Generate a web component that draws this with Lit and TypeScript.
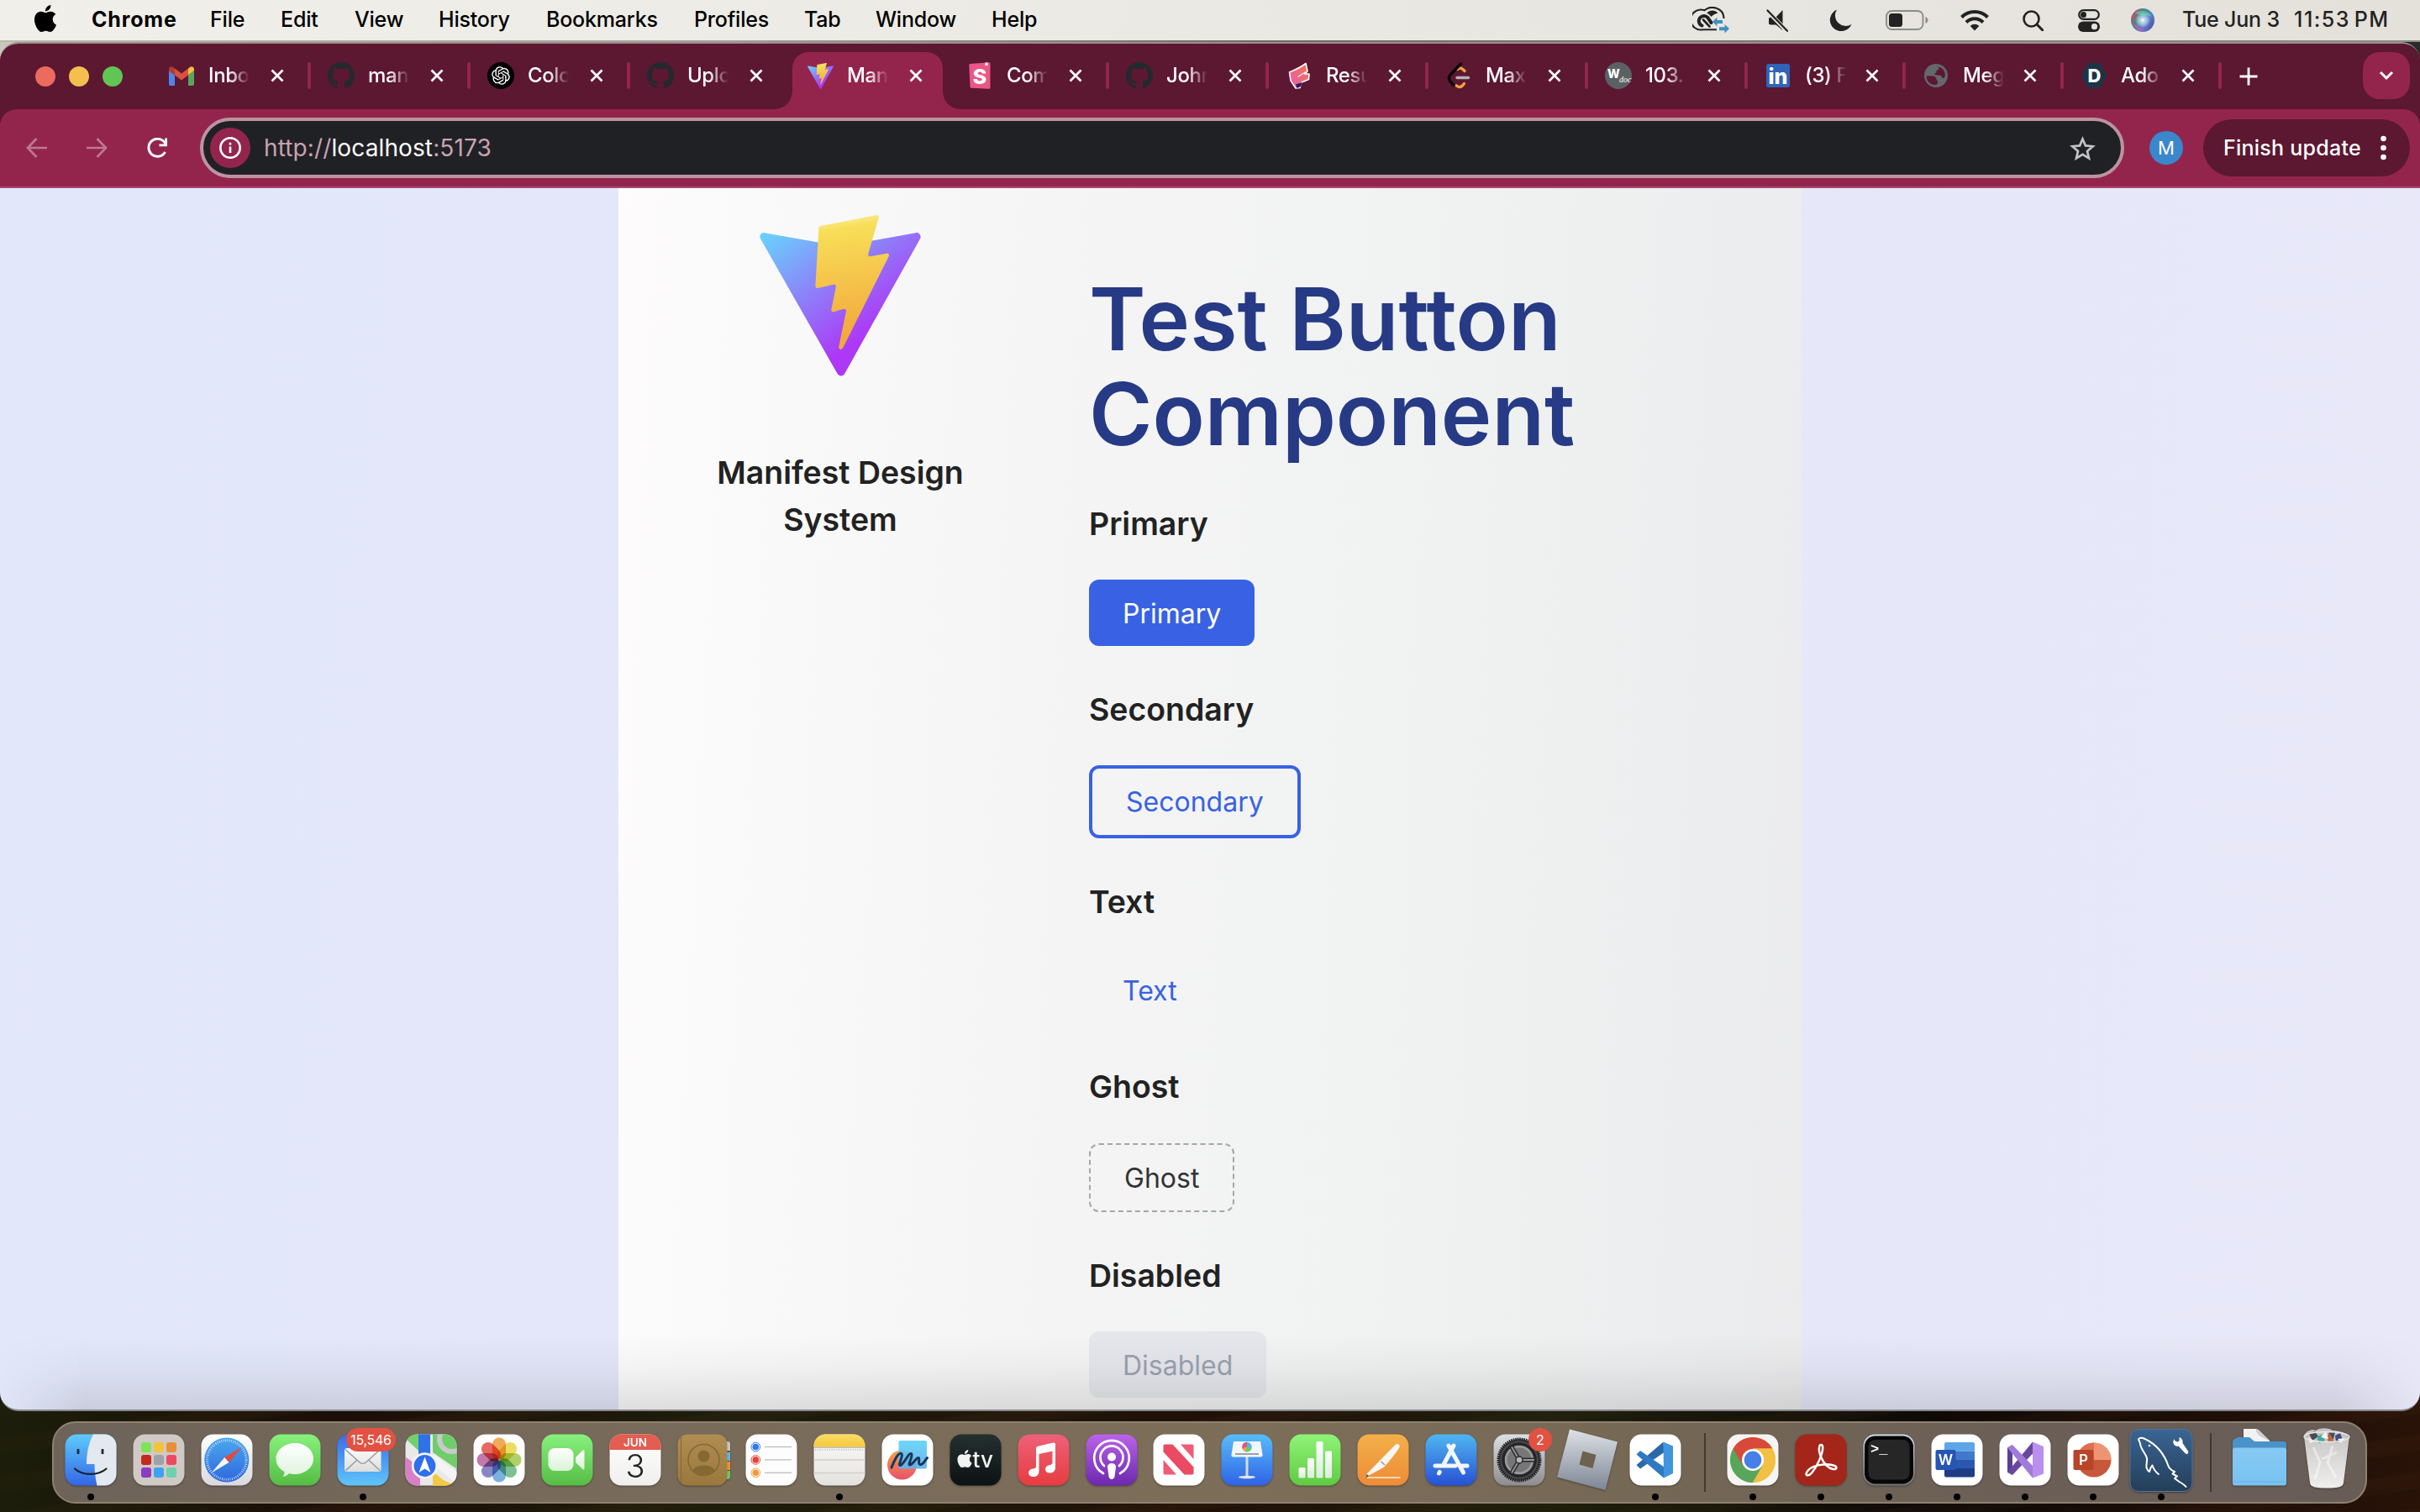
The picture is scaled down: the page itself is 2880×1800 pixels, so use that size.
import { LitElement, html, svg, css } from "lit";
import { customElement } from "lit/decorators.js";

const APPLE =
  "M12.152 6.896c-.948 0-2.415-1.078-3.96-1.04-2.04.027-3.91 1.183-4.961 3.014-2.117 3.675-.546 9.103 1.519 12.09 1.013 1.454 2.208 3.09 3.792 3.039 1.52-.065 2.09-.987 3.935-.987 1.831 0 2.35.987 3.96.948 1.637-.026 2.676-1.48 3.676-2.948 1.156-1.688 1.636-3.325 1.662-3.415-.039-.013-3.182-1.221-3.22-4.857-.026-3.04 2.48-4.494 2.597-4.559-1.429-2.09-3.623-2.324-4.39-2.376-2-.156-3.675 1.09-4.61 1.09zM15.53 3.83c.843-1.012 1.4-2.427 1.245-3.83-1.207.052-2.662.805-3.532 1.818-.78.896-1.454 2.338-1.273 3.714 1.338.104 2.715-.688 3.559-1.701";
const GITHUB =
  "M8 0C3.58 0 0 3.58 0 8c0 3.54 2.29 6.53 5.47 7.59.4.07.55-.17.55-.38 0-.19-.01-.82-.01-1.49-2.01.37-2.53-.49-2.69-.94-.09-.23-.48-.94-.82-1.13-.28-.15-.68-.52-.01-.53.63-.01 1.08.58 1.23.82.72 1.21 1.87.87 2.33.66.07-.52.28-.87.51-1.07-1.78-.2-3.64-.89-3.64-3.95 0-.87.31-1.59.82-2.15-.08-.2-.36-1.02.08-2.12 0 0 .67-.21 2.2.82.64-.18 1.32-.27 2-.27s1.36.09 2 .27c1.53-1.04 2.2-.82 2.2-.82.44 1.1.16 1.92.08 2.12.51.56.82 1.27.82 2.15 0 3.07-1.87 3.75-3.65 3.95.29.25.54.73.54 1.48 0 1.07-.01 1.93-.01 2.2 0 .21.15.46.55.38A8.01 8.01 0 0 0 16 8c0-4.42-3.58-8-8-8z";
const KNOT =
  "M22.2819 9.8211a5.9847 5.9847 0 0 0-.5157-4.9108 6.0462 6.0462 0 0 0-6.5098-2.9A6.0651 6.0651 0 0 0 4.9807 4.1818a5.9847 5.9847 0 0 0-3.9977 2.9 6.0462 6.0462 0 0 0 .7427 7.0966 5.98 5.98 0 0 0 .511 4.9107 6.051 6.051 0 0 0 6.5146 2.9001A5.9847 5.9847 0 0 0 13.2599 24a6.0557 6.0557 0 0 0 5.7718-4.2058 5.9894 5.9894 0 0 0 3.9977-2.9001 6.0557 6.0557 0 0 0-.7475-7.0729zm-9.022 12.6081a4.4755 4.4755 0 0 1-2.8764-1.0408l.1419-.0804 4.7783-2.7582a.7948.7948 0 0 0 .3927-.6813v-6.7369l2.02 1.1686a.071.071 0 0 1 .038.052v5.5826a4.504 4.504 0 0 1-4.4945 4.4944zm-9.6607-4.1254a4.4708 4.4708 0 0 1-.5346-3.0137l.142.0852 4.783 2.7582a.7712.7712 0 0 0 .7806 0l5.8428-3.3685v2.3324a.0804.0804 0 0 1-.0332.0615L9.74 19.9502a4.4992 4.4992 0 0 1-6.1408-1.6464zM2.3408 7.8956a4.485 4.485 0 0 1 2.3655-1.9728V11.6a.7664.7664 0 0 0 .3879.6765l5.8144 3.3543-2.0201 1.1685a.0757.0757 0 0 1-.071 0l-4.8303-2.7865A4.504 4.504 0 0 1 2.3408 7.872zm16.5963 3.8558L13.1038 8.364 15.1192 7.2a.0757.0757 0 0 1 .071 0l4.8303 2.7913a4.4944 4.4944 0 0 1-.6765 8.1042v-5.6772a.79.79 0 0 0-.407-.667zm2.0107-3.0231l-.142-.0852-4.7735-2.7818a.7759.7759 0 0 0-.7854 0L9.409 9.2297V6.8974a.0662.0662 0 0 1 .0284-.0615l4.8303-2.7866a4.4992 4.4992 0 0 1 6.6802 4.66zM8.3065 12.863l-2.02-1.1638a.0804.0804 0 0 1-.038-.0567V6.0742a4.4992 4.4992 0 0 1 7.3757-3.4537l-.142.0805L8.704 5.459a.7948.7948 0 0 0-.3927.6813zm1.0976-2.3654l2.602-1.4998 2.6069 1.4998v2.9994l-2.5974 1.4997-2.6067-1.4997Z";

const lin = (id: string, a: string, b: string) => svg`
  <linearGradient id=${id} x1="0" y1="0" x2="0" y2="1"><stop offset="0" stop-color=${a}></stop><stop offset="1" stop-color=${b}></stop></linearGradient>`;

const vite = (cls: string) => html`<svg class=${cls} viewBox="0 0 256 257">
  <defs>
    <linearGradient id="va" x1="-.828%" x2="57.636%" y1="7.652%" y2="78.411%"><stop offset="0" stop-color="#6bcdfc"></stop><stop offset="1" stop-color="#ad38f6"></stop></linearGradient>
    <linearGradient id="vb" x1="43.376%" x2="50.316%" y1="2.242%" y2="89.03%"><stop offset="0" stop-color="#fbe98c"></stop><stop offset=".083" stop-color="#f8de58"></stop><stop offset="1" stop-color="#f2a93c"></stop></linearGradient>
  </defs>
  <path fill="url(#va)" d="M255.153 37.938L134.897 252.976c-2.483 4.44-8.862 4.466-11.382.048L.875 37.958c-2.746-4.814 1.371-10.646 6.827-9.67l120.385 21.517a6.537 6.537 0 0 0 2.322-.004l117.867-21.483c5.438-.991 9.574 4.796 6.877 9.62Z"></path>
  <path fill="url(#vb)" d="M185.432.063L96.44 17.501a3.268 3.268 0 0 0-2.634 3.014l-5.474 92.456a3.268 3.268 0 0 0 3.997 3.378l24.777-5.718c2.318-.535 4.413 1.507 3.936 3.838l-7.361 36.047c-.495 2.426 1.782 4.5 4.151 3.78l15.304-4.649c2.372-.72 4.652 1.36 4.15 3.788l-11.698 56.621c-.732 3.542 3.979 5.473 5.943 2.437l1.313-2.028l72.516-144.72c1.215-2.423-.88-5.186-3.54-4.672l-25.505 4.922c-2.396.462-4.435-1.77-3.759-4.114l16.646-57.705c.677-2.35-1.37-4.583-3.769-4.113Z"></path>
</svg>`;

/* ---------- menu bar ---------- */

const MENUS: [string, number][] = [
  ["File", 84], ["Edit", 88], ["View", 100], ["History", 128], ["Bookmarks", 176],
  ["Profiles", 131], ["Tab", 85], ["Window", 138], ["Help", 60],
];

@customElement("menu-bar")
class MenuBar extends LitElement {
  static styles = css`
    :host { display: flex; height: 48px; flex: none; align-items: center; padding: 0 37px 0 37px; box-sizing: border-box; background: linear-gradient(90deg, #f0efe9, #eae9e4 50%, #e4e1da); color: #000; font: 500 25px/46px Inter, "Liberation Sans", sans-serif; white-space: pre; }
    .apple { width: 34px; height: 32px; margin: -4px 38px 0 0; }
    .app, .item, .date, .time { height: 48px; }
    .app { width: 141px; font-weight: 700; letter-spacing: 0.850px; }
    .item { letter-spacing: -0.2px; }
    .status { display: flex; align-items: center; margin-left: auto; height: 48px; color: #222; }
    .s1 { margin-left: 44px; } .s2 { margin-left: 49px; } .s3 { margin-left: 40px; } .s4 { margin-left: 38px; }
    .s5 { margin-left: 40px; } .s6 { margin-left: 41px; } .s7 { margin-left: 37px; }
    .date { width: 133px; margin-left: 33px; letter-spacing: -0.2px; }
    .time { width: 113px; letter-spacing: 1.500px; word-spacing: -3.500px; }
  `;
  render() {
    return html`
      <svg class="apple" viewBox="0 0 24 24"><path d=${APPLE}></path></svg>
      <span class="app">Chrome</span>
      ${MENUS.map(([t, w]) => html`<span class="item" style="width:${w}px">${t}</span>`)}
      <div class="status">
        <svg class="s0" width="44" height="32" viewBox="0 0 44 32">
          <path d="M29 27.200H13A12 12 0 1 1 14.500 4.300C22-2 37 .5 37.600 14" fill="none" stroke="#222" stroke-width="2.100"></path>
          <path d="M17 7.500C21 3.500 27 3.500 30.500 7.500c-3.500 1-6 2-8 4.500-1.500-2-3-3.500-5.500-4.500z" fill="#222"></path>
          <path d="M11.500 22.500a6 6 0 1 1 7.500-8.500l3.500 5" fill="none" stroke="#222" stroke-width="4" stroke-linecap="round"></path>
          <path d="M13 15.500L20.500 23.500" stroke="#222" stroke-width="2.600" stroke-linecap="round"></path>
          <path d="M24 17.700l5.500-5v3.300H36v4h-6.500v3.300zM44 26l-5.500-5v3.300H32v4h6.500v3.300z" fill="#3f8fc0"></path>
        </svg>
        <svg class="s1" width="26" height="27" viewBox="0 0 26 27">
          <path d="M19.500 1v24L11.500 18.500H5.500c-1.500 0-2.500-.7-2.500-2v-5c0-1.300 1-2 2.500-2h6z" fill="#222"></path>
          <path d="M.5 1L24.500 26" stroke="#e5e3dd" stroke-width="5"></path>
          <path d="M1.500 1.500L25 25.800" stroke="#222" stroke-width="2.200" stroke-linecap="round"></path>
        </svg>
        <svg class="s2" width="27" height="27" viewBox="0 0 27 27"><path d="M9 .5a13.300 13.300 0 1 0 17.500 17.200A12.500 12.500 0 0 1 9 .5z" fill="#222"></path></svg>
        <svg class="s3" width="51" height="24" viewBox="0 0 51 24">
          <rect x="1" y="1" width="43.500" height="22" rx="6.500" fill="none" stroke="#8d8c88" stroke-width="1.900"></rect>
          <path d="M47.500 8v8c4-1.500 4-6.500 0-8z" fill="#8d8c88"></path>
          <rect x="4" y="4" width="16" height="16" rx="3.500" fill="#222"></rect>
        </svg>
        <svg class="s4" width="34" height="25" viewBox="0 0 34 25">
          <path d="M1.500 8.500a22 22 0 0 1 31 0M7 14.500a14 14 0 0 1 20 0" fill="none" stroke="#222" stroke-width="4"></path>
          <path d="M17 24.500l-5.300-5.600a7.500 7.500 0 0 1 10.600 0z" fill="#222"></path>
        </svg>
        <svg class="s5" width="25" height="25" viewBox="0 0 25 25"><circle cx="10.500" cy="10.500" r="9" fill="none" stroke="#222" stroke-width="2.600"></circle><path d="M17 17l7 7" stroke="#222" stroke-width="3" stroke-linecap="round"></path></svg>
        <svg class="s6" width="26" height="27" viewBox="0 0 26 27">
          <rect x="1.200" y="1.200" width="23.600" height="10.600" rx="5.300" fill="none" stroke="#222" stroke-width="2.200"></rect><circle cx="6.500" cy="6.500" r="3.500" fill="#222"></circle>
          <rect x="0" y="14.500" width="26" height="12.500" rx="6.200" fill="#222"></rect><circle cx="19.500" cy="20.700" r="3.600" fill="#e5e3dd"></circle>
        </svg>
        <svg class="s7" width="28" height="28" viewBox="0 0 28 28">
          <defs>
            <linearGradient id="si" x1="0" y1=".2" x2="1" y2=".8"><stop offset="0" stop-color="#d8436b"></stop><stop offset=".35" stop-color="#3f8c8a"></stop><stop offset=".65" stop-color="#5b7fd0"></stop><stop offset="1" stop-color="#4f4f98"></stop></linearGradient>
            <radialGradient id="sg"><stop offset="0" stop-color="#fff"></stop><stop offset=".4" stop-color="#cfe6f4" stop-opacity=".75"></stop><stop offset="1" stop-color="#fff" stop-opacity="0"></stop></radialGradient>
          </defs>
          <circle cx="14" cy="14" r="14" fill="url(#si)"></circle>
          <path d="M5 5.500C12 1 22 3 24.500 10c-6-3-13-1-19.500-4.500z" fill="#5fd2ae" opacity=".7"></path>
          <path d="M3 18c5 2 8 6 14 8-6 2-12-1-14-8z" fill="#d750b8" opacity=".8"></path>
          <circle cx="14" cy="14" r="9" fill="url(#sg)"></circle>
        </svg>
        <span class="date">Tue Jun 3</span><span class="time">11:53 PM</span>
      </div>`;
  }
}

/* ---------- browser tabs ---------- */

const github = html`<svg width="32" height="32" viewBox="0 0 16 16"><path d=${GITHUB} fill="#24292e"></path></svg>`;
const TABS: { title: string; icon: unknown; active?: boolean; bare?: boolean; narrow?: boolean }[] = [
  { title: "Inbo", icon: html`<svg width="30" height="23" viewBox="0 0 30 23"><path d="M0 3v18a2 2 0 0 0 2 2h5V10.500L0 5z" fill="#4f86ec"></path><path d="M30 3v18a2 2 0 0 1-2 2h-5V10.500L30 5z" fill="#58a55c"></path><path d="M23 2.500v8L30 5V3a3 3 0 0 0-5-2z" fill="#f1bd42"></path><path d="M7 2.500v8L0 5V3a3 3 0 0 1 5-2z" fill="#b63a2c"></path><path d="M7 2.500l8 6 8-6v8l-8 6-8-6z" fill="#d9513f"></path></svg>` },
  { title: "man", icon: github },
  { title: "Colo", icon: html`<svg width="32" height="32" viewBox="0 0 32 32"><circle cx="16" cy="16" r="16"></circle><path transform="translate(5.200 5.200) scale(.9)" d=${KNOT} fill="#fff"></path></svg>` },
  { title: "Uplo", icon: github, bare: true },
  { title: "Mani", icon: vite("fav"), active: true, bare: true },
  { title: "Com", icon: html`<svg width="26" height="32" viewBox="0 0 26 32"><path d="M1.500 2L24 .3a1.500 1.500 0 0 1 1.500 1.500v28.500a1.500 1.500 0 0 1-1.600 1.500L3 30.800a1.500 1.500 0 0 1-1.500-1.400L.3 3.500A1.500 1.500 0 0 1 1.500 2z" fill="#ea5686"></path><path d="M19.500.6l3-.2v4.200l-1.500-1-1.600 1z" fill="#fff"></path><text x="13" y="25.500" text-anchor="middle" class="glyph" font-size="25" fill="#fff">S</text></svg>` },
  { title: "John", icon: github },
  { title: "Resu", icon: html`<svg width="28" height="32" viewBox="0 0 28 32"><defs><linearGradient id="fl" x1="1" y1="0" x2="0" y2="1"><stop offset="0" stop-color="#f2704f"></stop><stop offset="1" stop-color="#ea5fae"></stop></linearGradient></defs><path d="M22 1.500l2 9.500-3.500 3 5.500 0-.5 6.500L17 24l-2 6.500-5 .5L4 22l-1.500-10C9 9 15 7 22 1.500z" fill="url(#fl)" stroke="#fff" stroke-width="1.600" stroke-linejoin="round"></path><path d="M11.500 31l-1.500-4.500L18 24l-2 5z" fill="#2b1a66"></path><path d="M12.500 17.500L22 11.500" stroke="#fff" stroke-width="1.200"></path></svg>` },
  { title: "Maxi", icon: html`<svg width="28" height="32" viewBox="0 0 28 32"><path d="M21 10.500l-2.500-2.300c-2-1.700-4-1.700-6 .2" fill="none" stroke="#f0a33c" stroke-width="3.400" stroke-linecap="round"></path><path d="M20.500 25.500l-2 2.300c-2 2.200-5 2.200-7.500 0" fill="none" stroke="#f0a33c" stroke-width="3.400" stroke-linecap="round"></path><path d="M16.500 2L4 15c-2 2.500-2 5.500 0 8l4 4.500" fill="none" stroke="#070707" stroke-width="3.400" stroke-linecap="round"></path><path d="M12 18.500h13.500" stroke="#b3b3b3" stroke-width="3.400" stroke-linecap="round"></path></svg>` },
  { title: "103.", icon: html`<svg width="32" height="32" viewBox="0 0 32 32"><circle cx="16" cy="16" r="16" fill="#5b6163"></circle><text x="3" y="19" class="glyph" font-size="14" fill="#fff">W</text><text x="17" y="23.500" class="script" font-size="10" fill="#fff">doc</text></svg>` },
  { title: "(3) F", narrow: true, icon: html`<svg width="28" height="28" viewBox="0 0 28 28"><rect width="28" height="28" rx="2.500" fill="#2f64b8"></rect><text x="14" y="23.500" text-anchor="middle" class="glyph" font-size="25" fill="#fff">in</text></svg>` },
  { title: "Meg", narrow: true, icon: html`<svg width="28" height="28" viewBox="0 0 28 28"><circle cx="14" cy="14" r="14" fill="#63686b"></circle><path d="M2.800 14.500h7c2.500 0 4.500 1.500 4.500 3.500s2 1.500 2 3.500-1 3.500-3.500 3.500C7 25 2.500 20.500 2.800 14.500z" fill="#5d1732"></path><path d="M12 3c5 0 6 1.500 5.500 3s-3 1-3 3-1 2.500-3 2.500c1.500 2 4 2 7 2 2.500 0 2 3.500 4 3.500s2-3 2.500-3C25 7 19.500 2.500 12 3z" fill="#5d1732"></path></svg>` },
  { title: "Ado", narrow: true, icon: html`<svg width="30" height="30" viewBox="0 0 30 30"><path d="M8 0h14l8 15-8 15H8L0 15z" fill="#1b3547"></path><text x="15.500" y="23" text-anchor="middle" class="glyph" font-size="22" fill="#fff">D</text></svg>` },
];

@customElement("tab-strip")
class TabStrip extends LitElement {
  static styles = css`
    :host { display: flex; height: 78px; flex: none; align-items: center; background: #5c1731; font: 500 24px/32px Inter, "Liberation Sans", sans-serif; color: #fff; }
    .lights { display: flex; gap: 16px; width: 136px; padding-left: 42px; flex: none; }
    .light { width: 24px; height: 24px; border-radius: 12px; background: #ec6a5e; }
    .light.y { background: #f4bf4f; } .light.g { background: #61c554; }
    .tab { position: relative; box-sizing: border-box; width: 190px; height: 68px; flex: none; align-self: flex-end; display: flex; align-items: center; padding: 0 0 12px 14px; }
    .tab.narrow { width: 188px; }
    .icon { width: 48px; height: 32px; display: flex; align-items: center; justify-content: center; flex: none; }
    .fav { width: 31px; height: 31px; }
    .title { width: 50px; margin-left: 8px; white-space: nowrap; letter-spacing: -0.4px; flex: none; -webkit-mask: linear-gradient(90deg, #000 50%, transparent 98%); mask: linear-gradient(90deg, #000 50%, transparent 98%); }
    .close { width: 16px; height: 16px; margin-left: 24px; flex: none; }
    .narrow .close { margin-left: 22px; }
    .tab::after { content: ""; width: 4px; height: 32px; border-radius: 2px; background: #93254c; margin-left: auto; margin-right: -2px; }
    .tab.bare::after { visibility: hidden; }
    .tab.active { z-index: 0; }
    .shape { position: absolute; left: -18px; bottom: 0; width: 224px; height: 68px; z-index: -1; }
    .glyph { font-family: Inter, sans-serif; font-weight: 800; }
    .script { font-family: "Liberation Serif", serif; font-style: italic; }
    .plus { width: 22px; height: 22px; margin-left: 23px; flex: none; }
    .more { width: 56px; height: 56px; margin: 0 12px 2px auto; border-radius: 20px; background: #93254c; display: flex; align-items: center; justify-content: center; }
  `;
  render() {
    return html`
      <div class="lights"><div class="light"></div><div class="light y"></div><div class="light g"></div></div>
      ${TABS.map((t) => html`
        <div class="tab ${t.active ? "active" : ""} ${t.bare ? "bare" : ""} ${t.narrow ? "narrow" : ""}">
          ${t.active ? html`<svg class="shape" viewBox="0 0 224 68"><path d="M0 68c14 0 23-9 23-23V20C23 8 31 0 43 0h139c12 0 20 8 20 20v25c0 14 9 23 22 23z" fill="#93254c"></path></svg>` : ""}
          <span class="icon">${t.icon}</span><span class="title">${t.title}</span>
          <svg class="close" viewBox="0 0 16 16"><path d="M1.500 1.500l13 13M14.500 1.500l-13 13" stroke="#fff" stroke-width="2.700"></path></svg>
        </div>`)}
      <svg class="plus" viewBox="0 0 22 22"><path d="M11 .5v21M.5 11h21" stroke="#fff" stroke-width="2.800"></path></svg>
      <div class="more"><svg width="18" height="12" viewBox="0 0 18 12"><path d="M2 2l7 7 7-7" fill="none" stroke="#fff" stroke-width="3"></path></svg></div>`;
  }
}

@customElement("tool-bar")
class ToolBar extends LitElement {
  static styles = css`
    :host { display: block; flex: none; background: #5c1731; font-family: Inter, "Liberation Sans", sans-serif; }
    .bar { display: flex; align-items: center; height: 92px; border-bottom: 2px solid #a84a70; background: #93254c; border-radius: 20px 20px 0 0; }
    .nav { flex: none; }
    .back { margin-left: 31px; } .fwd { margin-left: 47px; } .reload { margin-left: 47px; }
    .url { box-sizing: border-box; width: 2290px; height: 72px; margin-left: 38px; border: 4px solid #bb949f; border-radius: 36px; background: #202124; display: flex; align-items: center; padding: 0 30px 0 8px; flex: none; }
    .info { width: 48px; height: 48px; border-radius: 24px; background: #93254c; display: flex; align-items: center; justify-content: center; }
    .text { margin-left: 16px; font-size: 28px; color: #c9a3b1; letter-spacing: 0.120px; }
    .host { color: #fff; }
    .star { margin-left: auto; }
    .avatar { width: 40px; height: 40px; margin-left: 30px; border-radius: 20px; background: #3b87cb; color: #fff; font-size: 22px; line-height: 40px; text-align: center; flex: none; }
    .update { box-sizing: border-box; width: 246px; height: 68px; margin-left: 24px; border-radius: 34px; background: #5c1731; color: #fff; font-size: 25px; font-weight: 500; display: flex; align-items: center; padding-left: 24px; letter-spacing: 0.250px; white-space: nowrap; }
    .dots { margin: 0 28px 0 auto; }
  `;
  render() {
    return html`<div class="bar">
      <svg class="nav back" width="25" height="24" viewBox="0 0 25 24"><path d="M12.500 1L2 12l10.500 11M2 12h23" fill="none" stroke="#bd7790" stroke-width="2.700"></path></svg>
      <svg class="nav fwd" width="25" height="24" viewBox="0 0 25 24"><path d="M12.500 1L23 12 12.500 23M23 12H0" fill="none" stroke="#bd7790" stroke-width="2.700"></path></svg>
      <svg class="nav reload" width="25" height="24" viewBox="0 0 25 24"><path d="M21.500 17A10.500 10.500 0 1 1 22 7.500" fill="none" stroke="#fff" stroke-width="2.900"></path><path d="M24 .5v9.700h-9.500V7.500h6.700V.5z" fill="#fff"></path></svg>
      <div class="url">
        <div class="info"><svg width="26" height="26" viewBox="0 0 26 26"><circle cx="13" cy="13" r="11.700" fill="none" stroke="#fff" stroke-width="2.500"></circle><path d="M13 11.500v7.500M13 6.700v2.700" stroke="#fff" stroke-width="2.600"></path></svg></div>
        <span class="text">http://<span class="host">localhost</span>:5173</span>
        <svg class="star" width="31" height="29" viewBox="0 0 31 29"><path d="M15.500 3.500l3.400 7.900 8.700.8-6.600 5.700 2 8.500-7.500-4.500L8 26.400l2-8.500-6.600-5.700 8.700-.8z" fill="none" stroke="#c4c3c4" stroke-width="2.700"></path></svg>
      </div>
      <div class="avatar">M</div>
      <div class="update">Finish update<svg class="dots" width="7" height="30" viewBox="0 0 7 30"><circle cx="3.500" cy="4" r="3.300" fill="#fff"></circle><circle cx="3.500" cy="15" r="3.300" fill="#fff"></circle><circle cx="3.500" cy="26" r="3.300" fill="#fff"></circle></svg></div>
    </div>`;
  }
}

/* ---------- page ---------- */

@customElement("design-page")
class DesignPage extends LitElement {
  static styles = css`
    :host { position: relative; display: flex; justify-content: center; flex: 1; min-height: 0; overflow: hidden; background: linear-gradient(95deg, #e2e8fa, #e3e7f9 28%, #e6e7f8 75%, #e8e8f9); font-family: Inter, "Liberation Sans", sans-serif; color: #222; }
    :host::after { content: ""; position: absolute; left: 0; right: 0; bottom: 0; height: 90px; background: linear-gradient(180deg, rgba(0,0,0,0), rgba(0,0,0,.03) 45%, rgba(0,0,0,.11)); -webkit-mask: linear-gradient(90deg, rgba(0,0,0,.1), #000 100px calc(100% - 100px), rgba(0,0,0,.1)); mask: linear-gradient(90deg, rgba(0,0,0,.1), #000 100px calc(100% - 100px), rgba(0,0,0,.1)); }
    .sheet { width: 1408px; display: flex; background: linear-gradient(93deg, #fefcfc, #f9f9f9 14%, #f4f4f4 42%, #f1f2f2 62%, #eef0f0 80%, #ecedef 91%, #ebebec); }
    .side { width: 528px; display: flex; flex-direction: column; align-items: center; padding-top: 32px; box-sizing: border-box; }
    .logo { width: 192px; height: 192px; flex: none; }
    .brand { width: 368px; margin: 87px 0 0; font-size: 37.440px; line-height: 56px; font-weight: 600; text-align: center; }
    .main { padding-left: 32px; padding-top: 100px; display: flex; flex-direction: column; align-items: flex-start; }
    .h1 { width: 700px; margin: 0 0 47px; font-size: 102.4px; line-height: 112.600px; font-weight: 600; color: #263a85; flex: none; font-variant-ligatures: none; }
    .h2 { margin: 0 0 38px; font-size: 37.440px; line-height: 56.160px; font-weight: 600; flex: none; }
    .btn { box-sizing: border-box; height: 78.600px; margin: 0 0 48px; padding: 2px 40px 0; border: 0 solid; border-radius: 12px; font: 400 32px/76px Inter, "Liberation Sans", sans-serif; background: none; display: flex; align-items: center; flex: none; }
    .primary { background: #3862e3; color: #fff; width: 197px; }
    .secondary { height: 86.600px; border: 4px solid #3862e3; color: #3862e3; width: 252px; }
    .text { color: #3862e3; }
    .ghost { height: 82.600px; border: 2px dashed #a6a6a6; color: #333; width: 173px; }
    .disabled { background: #e5e7ec; color: #9ba2b0; width: 211px; }
  `;
  render() {
    const kinds = ["Primary", "Secondary", "Text", "Ghost", "Disabled"];
    return html`<div class="sheet">
      <div class="side">${vite("logo")}<h3 class="brand">Manifest Design System</h3></div>
      <div class="main">
        <h1 class="h1">Test Button Component</h1>
        ${kinds.map((k) => html`<h2 class="h2">${k}</h2><button class="btn ${k.toLowerCase()}">${k}</button>`)}
      </div>
    </div>`;
  }
}

/* ---------- dock ---------- */

const base = (fill: string) => svg`<rect x=".5" y=".5" width="61" height="61" rx="14" fill=${fill}></rect>`;
const PETALS = ["#f19a37", "#ead73f", "#a4c84a", "#62b57d", "#5fa2dc", "#6f6cb8", "#b75d9a", "#e5483c"];
const PADS = ["#7fe356", "#f4c33d", "#e88f38", "#c3291f", "#9ca2a6", "#ee4964", "#8b3cc0", "#3ba2f6", "#6fd0ac"];

const ICONS: { art: unknown; dot?: boolean; badge?: string; gap?: boolean }[] = [
  { dot: true, art: svg`${lin("fi", "#5ecbfb", "#3366e5")}${base("url(#fi)")}<path d="M34 .5h14a14 14 0 0 1 13.500 14v33a14 14 0 0 1-14 14H38.500C36.500 53 35.500 45 35.500 36H26C26 22 29 10 34 .5z" fill="#e3e9ef"></path><path d="M16 18v6M45 18v6" stroke="#182a3a" stroke-width="2.800"></path><path d="M12 41.500c9 8.500 28 8.500 37.500 0" fill="none" stroke="#18222c" stroke-width="2.200" stroke-linecap="round"></path>` },
  { art: svg`${base("#cfcac5")}${PADS.map((c, i) => svg`<rect x=${10 + (i % 3) * 15} y=${10 + Math.floor(i / 3) * 15} width="12" height="12" rx="3" fill=${c}></rect>`)}` },
  { art: svg`${lin("sa", "#fff", "#dadadc")}${lin("sb", "#4aa8ee", "#2f68dd")}${base("url(#sa)")}<circle cx="30.800" cy="31" r="26.500" fill="url(#sb)"></circle><circle cx="30.800" cy="31" r="23.300" fill="none" stroke="#d4e6fb" stroke-width="3" stroke-dasharray=".8 1.640"></circle><path d="M49 15.500L33.500 34 28.300 28z" fill="#e5483d"></path><path d="M12.500 46.500L33.500 34 28.300 28z" fill="#f6f6f8"></path>` },
  { art: svg`${lin("me", "#87f27c", "#55bc44")}${lin("mf", "#fff", "#dff3dc")}${base("url(#me)")}<path d="M31 11c12.500 0 22 8.200 22 18.500S43.500 48 31 48c-2.500 0-5-.3-7-1-1.500 2-4.500 3.800-7.500 4 1.500-1.500 2.200-4 2-6C12.500 42 8.500 36.500 8.500 29.500 8.500 19.200 18.500 11 31 11z" fill="url(#mf)"></path>` },
  { dot: true, badge: "15,546", art: svg`${lin("ma", "#376bee", "#5fc6f8")}${lin("mb", "#fbfbfb", "#dcdcdc")}${base("url(#ma)")}<rect x="9" y="17" width="43.500" height="28" rx="3" fill="url(#mb)"></rect><path d="M10 18.500l16.500 15c2.500 2.300 6 2.300 8.500 0l16.500-15M10.500 43.500L24 31M51 43.500L37.500 31" fill="none" stroke="#9b9b9b" stroke-width="1.500"></path>` },
  { art: svg`<clipPath id="mc"><rect x=".5" y=".5" width="61" height="61" rx="14"></rect></clipPath><g clip-path="url(#mc)"><rect width="62" height="62" fill="#e9e9ea"></rect><path d="M0 0h16v20L0 5z" fill="#72cf6c"></path><path d="M0 27l18 13v22H0z" fill="#d97fc6"></path><path d="M33 0h29v42L33 22z" fill="#6fce6a"></path><circle cx="56" cy="6" r="15" fill="none" stroke="#c9c9cc" stroke-width="6"></circle><path d="M33 62V50l29 12z" fill="#f3c844"></path><path d="M33 62V45l22 17z" fill="#f3c844"></path><path d="M34 24l28 22v14L34 37z" fill="#f4f4f4"></path><path d="M16 0h14v40H16z" fill="#2f72e8"></path></g><circle cx="23.500" cy="38" r="14.300" fill="#2f6fec" stroke="#f3f3f5" stroke-width="2.800"></circle><path d="M23.500 27.500l7 18.500-7-4.500-7 4.500z" fill="#fff"></path>` },
  { art: svg`${base("#fdfdfd")}${PETALS.map((c, i) => svg`<rect x="23" y="4.500" width="16" height="26" rx="8" fill=${c} opacity=".82" style="mix-blend-mode:multiply" transform=${`rotate(${i * 45} 31 31)`}></rect>`)}` },
  { art: svg`${lin("ft", "#88f07d", "#56bd45")}${lin("fu", "#fff", "#d9f2d5")}${base("url(#ft)")}<rect x="8.500" y="17" width="30" height="27" rx="7.500" fill="url(#fu)"></rect><path d="M41 28l8.500-8.500c1-1 2-.5 2 1V41c0 1.500-1 2-2 1L41 34z" fill="url(#fu)"></path>` },
  { art: svg`${lin("ca", "#fff", "#efefed")}${base("url(#ca)")}<path d="M.5 19v-4.500a14 14 0 0 1 14-14h33a14 14 0 0 1 14 14V19z" fill="#e35d50"></path><text x="31" y="15" text-anchor="middle" class="t" font-size="13.500" font-weight="600" fill="#fff">JUN</text><text x="31" y="52" text-anchor="middle" class="t" font-size="38" font-weight="300" fill="#222">3</text>` },
  { art: svg`<path d="M56 9h4a3 3 0 0 1 3 3v8h-7z" fill="#c4c4c2"></path><path d="M56 22h7v10h-7z" fill="#5bb2ea"></path><path d="M56 33h7v10h-7z" fill="#ef8f2f"></path><path d="M56 44h7v7a3 3 0 0 1-3 3h-4z" fill="#67c664"></path>${lin("co", "#b08e52", "#9a783d")}<rect x=".5" y=".5" width="59" height="61" rx="12" fill="url(#co)"></rect><path d="M4.500 4v54" stroke="#866833" stroke-width="1"></path><circle cx="31.500" cy="31" r="18.500" fill="none" stroke="#866833" stroke-width="1.600"></circle><circle cx="31.500" cy="26.500" r="7" fill="#866833"></circle><path d="M18.500 43.500c3-8 23-8 26 0a18.500 18.500 0 0 1-26 0z" fill="#866833"></path>` },
  { art: svg`${base("#fdfdfd")}${["#2f78f5", "#e4453a", "#f09a37"].map((c, i) => svg`<circle cx="12.300" cy=${15.5 + i * 15.4} r="3.800" fill=${c}></circle><circle cx="12.300" cy=${15.5 + i * 15.4} r="5.300" fill="none" stroke=${c} stroke-width="1"></circle><path d=${`M23 ${15.5 + i * 15.4}h32`} stroke="#b9b9bd" stroke-width="1.200"></path>`)}` },
  { dot: true, art: svg`${lin("no", "#fbfbfa", "#e3e2de")}${lin("np", "#fbdb66", "#f5c83c")}${base("url(#no)")}<path d="M.5 15.500v-1a14 14 0 0 1 14-14h33a14 14 0 0 1 14 14v1z" fill="url(#np)"></path><path d="M.5 16.200h61" stroke="#a9a294" stroke-width="1"></path><path d="M2 19h58" stroke="#b9b9b4" stroke-width="1.400" stroke-dasharray="1.200 1.600"></path><path d="M.5 31h61M.5 46.500h61" stroke="#d1d0cc" stroke-width="1.400"></path>` },
  { art: svg`${lin("fr", "#f3a144", "#e8526b")}${lin("fs", "#63d4fa", "#6aaee8")}${base("#fff")}<circle cx="24.500" cy="37" r="17.500" fill="url(#fr)"></circle><rect x="20.500" y="8" width="33.500" height="33.500" rx="2" fill="url(#fs)" opacity=".94"></rect><path d="M12 40c3-8 8-18 11.500-16.500s-5 15-1 14 10-15.500 13-14-5 14-1.500 13.500 7.500-9 10-8.500-1.500 7.500 2 8 5.500-4.500 8.500-8" fill="none" stroke="#123a5e" stroke-width="3" stroke-linecap="round"></path>` },
  { art: svg`${lin("tv", "#24302f", "#0d1214")}${base("url(#tv)")}<path transform="translate(7.500 19) scale(.88)" d=${APPLE} fill="#f2f3f3"></path><text x="27.500" y="40" class="t" font-size="26" font-weight="500" fill="#f2f3f3">tv</text>` },
  { art: svg`${lin("mu", "#ee6179", "#e63c40")}${base("url(#mu)")}<path d="M22 17.500c0-1.500.8-2.400 2.200-2.700l18-4.200c1.800-.4 2.800.4 2.800 2v27.500c0 4-2.500 6.500-6.500 6.500-3.500 0-5.500-2-5.500-4.500s2-4.500 5-5c2.500-.4 3.500-1 3.500-3V20.500L25.500 24v20.500c0 4-2.500 6.500-6.500 6.500-3.500 0-6-1.800-6-4.500s2-4.500 5-5c3-.4 4-1 4-3z" fill="#fff"></path>` },
  { art: svg`${lin("po", "#bb63ea", "#6c28ae")}${base("url(#po)")}<circle cx="31" cy="27.500" r="5" fill="#fff"></circle><path d="M26 39.500c0-3 2-4.500 5-4.500s5 1.500 5 4.500l-1.500 11c-.5 4.500-6.500 4.500-7 0z" fill="#fff"></path><path d="M22 38a13.500 13.500 0 1 1 18 0" fill="none" stroke="#fff" stroke-width="2.700" stroke-linecap="round"></path><path d="M21 47a20.800 20.800 0 1 1 20 0" fill="none" stroke="#fff" stroke-width="2.700" stroke-linecap="round"></path>` },
  { art: svg`${base("#fff")}<path d="M12.500 14.500c0-1.300.7-2 2-2h9l25 27v7c0 1.300-.7 2-2 2h-9l-25-27z" fill="#ea4a62"></path><path d="M33 12.500h13.500c1.300 0 2 .7 2 2V30zM12.500 31L28 48.500H14.500c-1.300 0-2-.7-2-2z" fill="#ef5c77"></path>` },
  { art: svg`${lin("ke", "#58bdf8", "#2f63e6")}${base("url(#ke)")}<path d="M29.500 27h3v24h-3z" fill="#d5dbe2"></path><ellipse cx="31" cy="51.500" rx="10" ry="1.800" fill="#dfe4ea"></ellipse><path d="M15 9h32l2.500 15.500c.3 2-.5 3-2.500 3H15c-2 0-2.800-1-2.500-3z" fill="#f2f5f9"></path><path d="M17 24h28" stroke="#7d8fa5" stroke-width="1.600"></path><circle cx="31" cy="15.500" r="5.800" fill="#53b6e6"></circle><path d="M31 15.500V9.700a5.800 5.800 0 0 0-5.500 7.500z" fill="#e5567a"></path><path d="M31 15.500l-5.500 1.700a5.800 5.800 0 0 0 4 4z" fill="#f1a13b"></path><path d="M31 15.500l-1.500 5.700a5.800 5.800 0 0 0 7-3.700z" fill="#6ccc62"></path>` },
  { art: svg`${lin("nu", "#8ff377", "#5ecb42")}${lin("nv", "#fff", "#dcebdc")}${base("url(#nu)")}<rect x="11.500" y="40" width="8" height="12.500" rx="1.500" fill="url(#nv)"></rect><rect x="22" y="29" width="8" height="23.500" rx="1.500" fill="url(#nv)"></rect><rect x="32.500" y="9" width="8" height="43.500" rx="1.500" fill="url(#nv)"></rect><rect x="43" y="20.500" width="8" height="32" rx="1.500" fill="url(#nv)"></rect>` },
  { art: svg`${lin("pa", "#f3b049", "#ee8b37")}${base("url(#pa)")}<path d="M12 52h39.500" stroke="#fbd9b0" stroke-width="2"></path><path d="M45 13.500c2-2.500 6.500-2 5.500 2-1.200 4-14 19.500-19 24.500L14 49.500l-3.500 3 1.200-5z" fill="#f8f6f3"></path><path d="M28.500 33l4.500 4" stroke="#9a9a9a" stroke-width="1.600"></path><path d="M10.500 52.500l1.200-4.500 2.500 2z" fill="#4b4b4b"></path>` },
  { art: svg`${lin("as", "#4fb6f1", "#2751d4")}${base("url(#as)")}<g stroke="#f3f6fb" stroke-width="5" stroke-linecap="round"><path d="M34 14L21.500 37.500M16.500 47l.8-1.600M28 14l17.500 32M12 38h24M44 38h6"></path></g>` },
  { badge: "2", art: svg`${lin("se", "#dce1e6", "#8d8d90")}${base("url(#se)")}<circle cx="31" cy="31" r="25" fill="#4b4b4d"></circle><circle cx="31" cy="31" r="24.500" fill="none" stroke="#1e1e20" stroke-width="4" stroke-dasharray="1.500 1"></circle><circle cx="31" cy="31" r="19" fill="#9b9b9d" stroke="#262628" stroke-width="3.500"></circle><circle cx="31" cy="31" r="14.500" fill="#77777a"></circle><path d="M31 31h18M31 31l-9-15.500M31 31l-9 15.500" stroke="#2b2b2d" stroke-width="5"></path><path d="M31 31h18M31 31l-9-15.500M31 31l-9 15.500" stroke="#9a9a9c" stroke-width="1.800"></path><circle cx="31" cy="31" r="4" fill="#b5b5b7" stroke="#2b2b2d" stroke-width="1.500"></circle>` },
  { art: svg`${lin("ro", "#dde1e6", "#7c8694")}<path d="M10-5.500L67 9.500 52.500 67-5 51.500z" fill="url(#ro)"></path><path d="M25.500 20.500L41.500 25 37.500 41 21.500 36.500z" fill="#6d614f"></path>` },
  { dot: true, gap: true, art: svg`${base("#fff")}<path d="M40.500 9.500L8.500 37l4.500 4.500L41.500 22z" fill="#2a68a8"></path><path d="M41 52.500L8.500 24.500 13 20l28.500 19.500z" fill="#3079c2"></path><path d="M40.500 9.500L52 14.500v32.500l-11 5.500z" fill="#4194e0"></path>` },
  { dot: true, art: svg`${base("#f6f5f3")}<circle cx="31" cy="31" r="27" fill="#f0bf42"></circle><path d="M31 31L7.600 17.500a27 27 0 0 0 23.400 40.500l11.700-20.300z" fill="#58a55c"></path><path d="M7.600 17.500a27 27 0 0 1 46.800 0H31L19.300 37.700z" fill="#d8493a"></path><path d="M54.400 17.500A27 27 0 0 1 31 58l11.700-20.300L31 17.500z" fill="#f2c144"></path><circle cx="31" cy="31" r="13" fill="#fff"></circle><circle cx="31" cy="31" r="10.400" fill="#467fe8"></circle>` },
  { dot: true, art: svg`${base("#a42519")}<path d="M14 46c3-6 12-9 20-9.500 7-.5 15 .5 15.500 3.500.4 3.500-7 2.500-12-2.500-5-5-9.500-15-8.500-21.500.5-4 4-4 4.200 0C33.500 23 27 38 20.500 46c-3 4-8.500 5-6.500 0z" fill="none" stroke="#fff" stroke-width="2.500"></path>` },
  { dot: true, art: svg`${lin("te", "#cfdde8", "#6f7376")}${base("url(#te)")}<rect x="2" y="2.500" width="58" height="57" rx="12.500" fill="#060606"></rect><rect x="6.500" y="7" width="49" height="47.500" rx="8" fill="#262626"></rect><text x="9" y="23" class="m" font-size="17" fill="#fff">&gt;_</text>` },
  { dot: true, art: svg`${base("#fff")}<path d="M18 10h32a2 2 0 0 1 2 2v8.500H16V12a2 2 0 0 1 2-2z" fill="#5ca5e8"></path><path d="M16 20.500h36V31H16z" fill="#4079cb"></path><path d="M16 31h36v10H16z" fill="#2c57b0"></path><path d="M16 41h36v8.500a2 2 0 0 1-2 2H18a2 2 0 0 1-2-2z" fill="#1f3d85"></path><rect x="5.500" y="19" width="24" height="24" rx="2" fill="#2755b2"></rect><text x="17.500" y="37" text-anchor="middle" class="t" font-size="17" font-weight="600" fill="#fff">W</text>` },
  { dot: true, art: svg`${base("#fff")}<path d="M10 16.500L16 13v36l-6-3.500z" fill="#59408f"></path><path d="M10 45.500L40 9.500v14L16 49z" fill="#68489f"></path><path d="M40 9.500l13 5.500v32.500l-13 5z" fill="#b990ee"></path><path d="M10 16.500l6-3.500L40 38v14.500z" fill="#a07bdc"></path>` },
  { dot: true, art: svg`${base("#fff")}<circle cx="32" cy="31" r="20.500" fill="#c8583a"></circle><path d="M32 10.500A20.500 20.500 0 0 1 52.500 31H32z" fill="#ef9472"></path><path d="M32 10.500A20.500 20.500 0 0 0 11.500 31H32z" fill="#dd7050"></path><rect x="7.500" y="19" width="24" height="24" rx="2" fill="#b94428"></rect><text x="19.500" y="37" text-anchor="middle" class="t" font-size="17" font-weight="600" fill="#fff">P</text>` },
  { dot: true, gap: true, art: svg`${lin("my", "#3a6593", "#243e59")}<rect x="-6" y="-5.500" width="74" height="74" rx="10" fill="url(#my)" stroke="#55779a" stroke-width="1"></rect><path d="M4 6.500c1-3 6-2 9.500.5C26 13 35 25 39 37c1 3.500 3 6 8 8l-2.500 2.500 5.500 3-3 2.500 5.500 4c3.500 2 6 3.500 8 6M4 6.500c1 2 2 4 2.500 7.500C8 20 13 24 14 29c.5 4-1 7-.5 11 1 3 2 4.500 3.500 5 .5-3 2-6 3.500-7.500C22 42 25 46 28 48" fill="none" stroke="#fff" stroke-width="2" stroke-linejoin="round" stroke-linecap="round"></path><circle cx="17" cy="14" r="1.300" fill="#fff"></circle><path d="M47 6c-2 2-2.500 5 0 7.500 2 1.500 3 1.500 4.500 1l8.500 9c2.500 1.500 4-1 3-3L56.500 11c.5-3-.5-5.500-4-7v4.500l-2.500 1-3-1.500z" fill="#fff"></path>` },
  { art: svg`${lin("fo", "#86c9f3", "#78c2f1")}<path d="M12-6h15l16 14v8H12z" fill="#f2f2f2"></path><path d="M27-6c-1 5 4 10 16 14L30-5z" fill="#cfcfcf"></path><path d="M-1 56V10c0-2.500 1.500-4 4-4.500L5 4h14l6 5h35c2 0 3 1.500 3 3v44z" fill="#4a93c9"></path><rect x="-1" y="16.500" width="64" height="45" rx="3" fill="url(#fo)"></rect><path d="M-1 57h64" stroke="#69b2e2" stroke-width="1"></path>` },
  { art: svg`${lin("tr", "#c9c8c6", "#f0efee")}<path d="M4 2c2-5 9-8 14-6 6-4 16-3 20 0 7 0 15 2 20 8L54 12H8z" fill="#c6c4c1"></path><path d="M4 3l7 55c.5 5 6 6.500 20 6.500S50.500 63 51 58L58 3c-3 8-51 8-54 0z" fill="url(#tr)"></path><path d="M10 0l7-3 4 6-7 5zM34-3l7 1-2 8-7-1z" fill="#4a4a55"></path><path d="M19 3l6-2 4 7-7 3z" fill="#3fa7a0"></path><path d="M31 3l4-3 5 9-7 1z" fill="#b5653c"></path><path d="M41 2l6-3 3 8-8 3z" fill="#3b4f86"></path><path d="M24 4l6-7 3 9zM9 4l8 5-6 2zM44 6l9-1-5 6z" fill="#f6f6f5"></path><path d="M15 16l8 18-6 20M38 14l-6 20 10 18M25 30l18-8" stroke="#fff" stroke-width="3" opacity=".45" fill="none"></path><ellipse cx="31" cy="3.500" rx="27" ry="6" fill="none" stroke="#e9e8e6" stroke-width="1.400"></ellipse>` },
];

@customElement("app-dock")
class AppDock extends LitElement {
  static styles = css`
    :host { box-sizing: border-box; display: flex; width: 2755px; height: 98px; flex: none; align-items: flex-start; padding: 0 0 0 4px; border: 2px solid #8d8171; border-radius: 28px; background: linear-gradient(90deg, #6e6359, #776a5a 22%, #7d6e59 52%, #756855 68%, #6b5f57 85%, #685c57); }
    .slot { position: relative; width: 80.940px; height: 94px; flex: none; display: flex; flex-direction: column; align-items: center; padding-top: 13px; box-sizing: border-box; }
    .art { width: 62px; height: 62px; overflow: visible; flex: none; filter: drop-shadow(0 1px 1px rgba(0,0,0,.35)); }
    .dot { width: 8px; height: 8px; border-radius: 4px; background: #000; margin-top: 9px; }
    .sep { width: 2px; height: 70px; margin: 12px 16px 0 17.500px; background: #463a2e; flex: none; }
    .badge { position: absolute; top: 6px; right: 2px; box-sizing: border-box; min-width: 28px; height: 28px; padding: 0 5px; border-radius: 14px; background: #e25141; color: #fff; font: 400 16px/28px Inter, "Liberation Sans", sans-serif; text-align: center; letter-spacing: -0.3px; }
    .t { font-family: Inter, "Liberation Sans", sans-serif; }
    .m { font-family: "Liberation Mono", monospace; font-weight: 700; }
  `;
  render() {
    return ICONS.map((i) => html`
      <div class="slot">
        <svg class="art" viewBox="0 0 62 62">${i.art}</svg>
        ${i.dot ? html`<div class="dot"></div>` : ""}
        ${i.badge ? html`<span class="badge">${i.badge}</span>` : ""}
      </div>${i.gap ? html`<div class="sep"></div>` : ""}`);
  }
}

@customElement("app-root")
class AppRoot extends LitElement {
  static styles = css`
    :host { display: flex; flex-direction: column; width: 2880px; height: 1800px; overflow: hidden; background: linear-gradient(90deg, rgba(30,34,12,.8), rgba(50,22,10,.3) 14%, rgba(38,42,14,.6) 30%, rgba(52,24,10,.4) 50%, rgba(36,40,14,.7) 64%, rgba(12,8,6,.5) 80%, rgba(56,24,10,.6)), repeating-linear-gradient(172deg, #120a06 0 22px, #1f120a 26px 38px, #151108 44px); }
    .window { display: flex; flex-direction: column; box-sizing: border-box; height: 1630px; flex: none; border-top: 2px solid #9c8f92; border-bottom: 2px solid #85878c; border-radius: 22px; overflow: hidden; }
    .top { flex: none; box-sizing: border-box; height: 1632px; padding-top: 2px; background: linear-gradient(90deg, #b9baa9, #a2a294 30%, #6d6b64 52%, #8d8b82) top/100% 2px no-repeat, linear-gradient(90deg, #c9c9ba 60%, #2a2a28 99%) top/100% 30px no-repeat; }
    .dockrow { display: flex; padding: 12px 0 0 62px; }
  `;
  render() {
    return html`
      <menu-bar></menu-bar>
      <div class="top"><div class="window">
        <tab-strip></tab-strip>
        <tool-bar></tool-bar>
        <design-page></design-page>
      </div></div>
      <div class="dockrow"><app-dock></app-dock></div>`;
  }
}
